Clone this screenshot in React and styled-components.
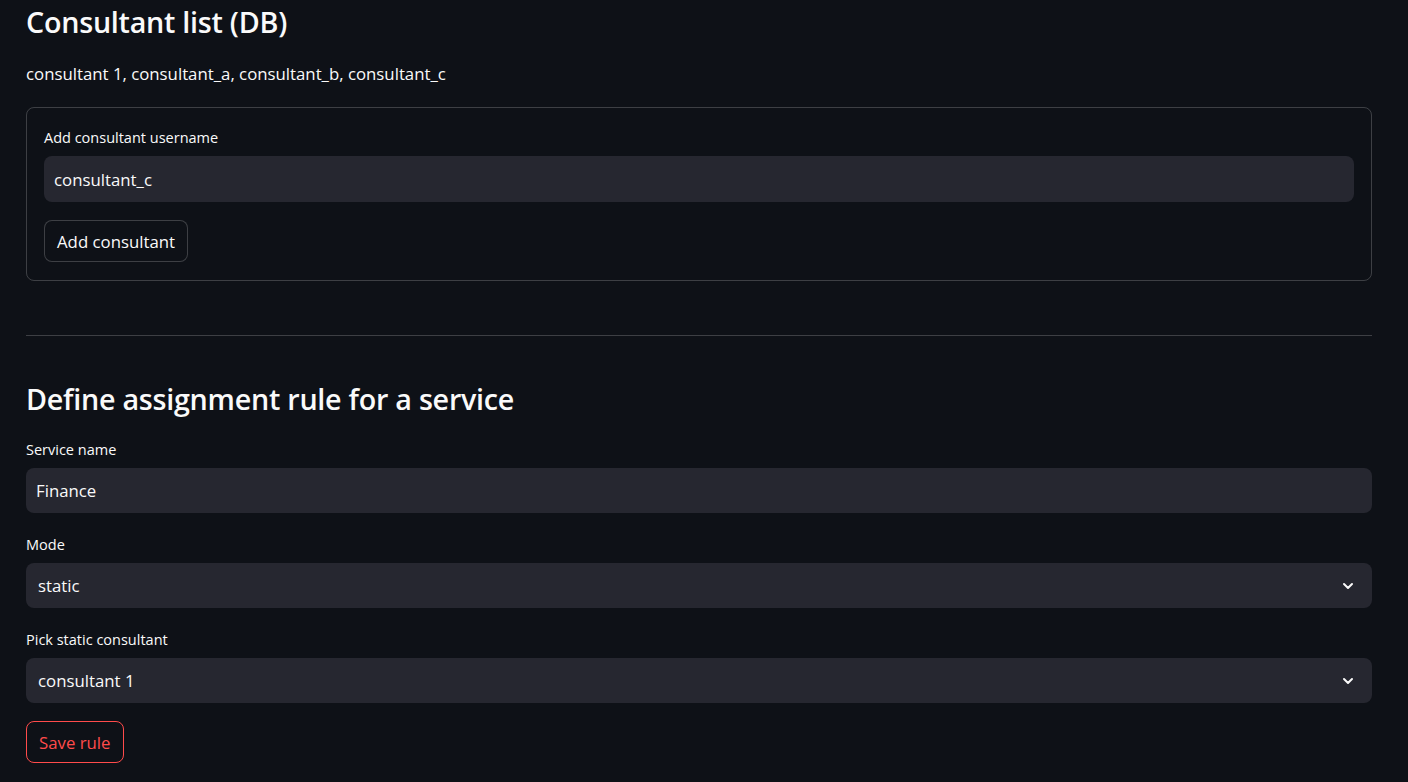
import styled, { createGlobalStyle } from "styled-components"

const GlobalStyle = createGlobalStyle`
    body {
        margin: 0;
        background: #0e1117;
        color: #fafafa;
        font-family: "Open Sans", "Noto Sans", sans-serif;
    }
`

const Main = styled.main`
    display: flex;
    flex-direction: column;
    padding: 5px 36px 20px 26px;
`

const Heading = styled.h3`
    margin: ${props => props.top || 0}px 0 0 0;
    font-size: 28.7px;
    line-height: 34px;
    font-weight: 600;
    letter-spacing: -0.25px;
`

const Text = styled.p`
    margin: 23px 0 0 0;
    font-size: 16.8px;
    line-height: 24px;
`

const FormBox = styled.div`
    margin-top: 21px;
    border: 1px solid rgba(250, 250, 250, 0.2);
    border-radius: 8px;
    padding: 20px 17px 18px 17px;
    display: flex;
    flex-direction: column;
`

const Field = styled.div`
    display: flex;
    flex-direction: column;
    margin-top: ${props => props.top || 0}px;
`

const Label = styled.label`
    font-size: 14.5px;
    line-height: 20px;
    margin-bottom: 8px;
`

const Input = styled.input`
    box-sizing: border-box;
    height: ${props => props.h || 45}px;
    background: #262730;
    border: none;
    border-radius: 8px;
    padding: 0 10px;
    color: #fafafa;
    font-family: inherit;
    font-size: 16.8px;
    outline: none;
`

const Select = styled.div`
    display: flex;
    align-items: center;
    justify-content: space-between;
    height: 45px;
    background: #262730;
    border-radius: 8px;
    padding: 0 16px 0 12px;
    font-size: 16.8px;
`

const Button = styled.button`
    align-self: flex-start;
    height: 42px;
    margin-top: ${props => props.top || 0}px;
    padding: 0 12px;
    background: #0e1117;
    border: 1px solid ${props => props.primary ? '#ff4b4b' : 'rgba(250, 250, 250, 0.2)'};
    color: ${props => props.primary ? '#ff4b4b' : '#fafafa'};
    border-radius: 8px;
    font-family: inherit;
    font-size: 16.8px;
`

const Divider = styled.hr`
    margin: 54px 0 0 0;
    border: none;
    border-top: 1px solid rgba(250, 250, 250, 0.2);
`

const Chevron = () => (
    <svg width="16" height="16" viewBox="0 0 24 24" fill="none" stroke="#fafafa" strokeWidth="3" strokeLinecap="round" strokeLinejoin="round">
        <path d="M6 9l6 6 6-6" />
    </svg>
)

export default function App() {
    return (
        <Main>
            <GlobalStyle />
            <Heading>Consultant list (DB)</Heading>
            <Text>consultant 1, consultant_a, consultant_b, consultant_c</Text>
            <FormBox>
                <Field>
                    <Label>Add consultant username</Label>
                    <Input h={46} defaultValue="consultant_c" />
                </Field>
                <Button top={18}>Add consultant</Button>
            </FormBox>
            <Divider />
            <Heading top={46}>Define assignment rule for a service</Heading>
            <Field top={24}>
                <Label>Service name</Label>
                <Input defaultValue="Finance" />
            </Field>
            <Field top={22}>
                <Label>Mode</Label>
                <Select>static<Chevron /></Select>
            </Field>
            <Field top={22}>
                <Label>Pick static consultant</Label>
                <Select>consultant 1<Chevron /></Select>
            </Field>
            <Button primary top={18}>Save rule</Button>
        </Main>
    )
}
